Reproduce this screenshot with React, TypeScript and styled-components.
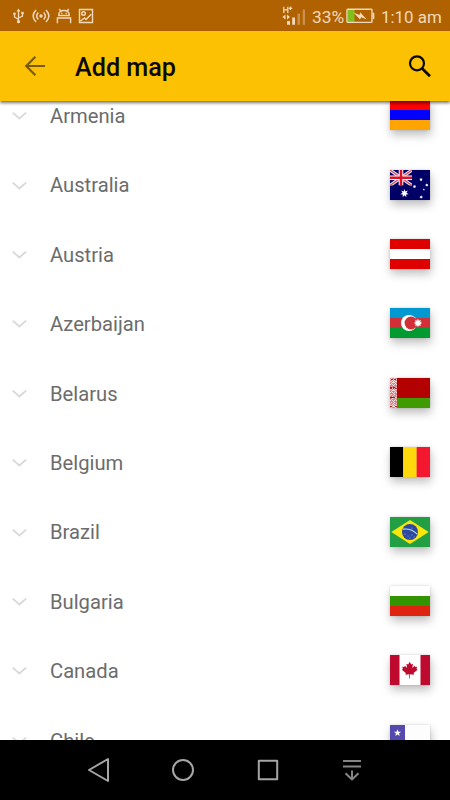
import React from 'react';
import styled, { createGlobalStyle } from 'styled-components';

const GlobalStyle = createGlobalStyle`
  * { box-sizing: border-box; }
  body { margin: 0; background: #fff; font-family: Roboto, sans-serif; overflow: hidden; }
  svg { display: block; flex: none; }
`;

const Screen = styled.main`
  width: 450px;
  height: 800px;
  display: flex;
  flex-direction: column;
  overflow: hidden;
  background: #fff;
`;

const StatusBar = styled.header`
  flex: none;
  height: 31px;
  display: flex;
  align-items: center;
  padding: 1px 8px 0 11px;
  background: #b06200;
  color: #f1d9bc;
`;

const Notifications = styled.div`
  display: flex;
  align-items: center;
  gap: 6px;
`;

const SystemStatus = styled.div`
  display: flex;
  align-items: center;
  margin-left: auto;
`;

const StatusText = styled.span<{ $width: number; $gap: number; $size: number }>`
  width: ${(p) => p.$width}px;
  margin-left: ${(p) => p.$gap}px;
  font-size: ${(p) => p.$size}px;
  line-height: 30px;
  padding-top: 2px;
  white-space: nowrap;
`;

const AppBar = styled.nav`
  flex: none;
  position: relative;
  z-index: 1;
  height: 70px;
  display: flex;
  align-items: center;
  padding: 0 18px 0 24px;
  background: #fdc103;
  box-shadow: 0 2px 3px rgba(0, 0, 0, 0.55);
`;

const IconButton = styled.button`
  display: flex;
  padding: 0;
  border: 0;
  background: none;
`;

const Title = styled.h1`
  flex: 1;
  margin: 4px 0 0 29px;
  font-size: 25.2px;
  line-height: 32px;
  font-weight: 500;
  color: #0c0900;
`;

const Viewport = styled.section`
  flex: 1;
  min-height: 0;
  overflow: hidden;
`;

const CountryList = styled.ul`
  list-style: none;
  margin: -20.4px 0 0;
  padding: 0;
`;

const CountryRow = styled.li`
  height: 69.4px;
  display: flex;
  align-items: center;
  padding: 0 20px 0 11px;
`;

const CountryName = styled.span`
  flex: 1;
  margin: 1.4px 0 0 23px;
  font-size: 20.2px;
  line-height: 28px;
  color: #6c6c6c;
`;

const FlagFrame = styled.div`
  width: 40px;
  height: 30px;
  box-shadow: 0 0 2px rgba(0, 0, 0, 0.16), 1px 5px 10px rgba(0, 0, 0, 0.25);
`;

const NavigationBar = styled.footer`
  flex: none;
  height: 60px;
  display: flex;
  align-items: center;
  justify-content: space-between;
  padding: 0 86px 0 87px;
  background: #000;
`;

const Stripes = ({ colors }: { colors: string[] }) => (
  <>
    {colors.map((c, i) => (
      <rect key={i} y={i * 10} width="40" height="10" fill={c} />
    ))}
  </>
);

const star = (cx: number, cy: number, r: number, inner: number, n: number) =>
  Array.from({ length: n * 2 }, (_, i) => {
    const d = i % 2 ? inner : r;
    const a = -Math.PI / 2 + (i * Math.PI) / n;
    return `${(cx + d * Math.cos(a)).toFixed(2)},${(cy + d * Math.sin(a)).toFixed(2)}`;
  }).join(' ');

const AustraliaFlag = () => (
  <>
    <rect width="40" height="30" fill="#000066" />
    <svg width="22" height="15.5" viewBox="0 0 22 15.5">
      <path d="M0 0L22 15.5M22 0L0 15.5" stroke="#e8e4f0" strokeWidth="3.2" />
      <path d="M0 0L22 15.5M22 0L0 15.5" stroke="#d94a59" strokeWidth="1.2" />
      <path d="M11 0V15.5M0 7.8H22" stroke="#fff" strokeWidth="4.6" />
      <path d="M11 0V15.5M0 7.8H22" stroke="#dc1025" strokeWidth="2.6" />
    </svg>
    <g fill="#fff">
      <polygon points={star(14.5, 23.3, 4.3, 2, 7)} />
      <polygon points={star(31, 9.6, 1.8, 0.9, 7)} />
      <polygon points={star(24.5, 16.6, 1.8, 0.9, 7)} />
      <polygon points={star(36.8, 15, 1.8, 0.9, 7)} />
      <polygon points={star(31.2, 27, 1.8, 0.9, 7)} />
      <polygon points={star(33.8, 19.5, 1.1, 0.5, 5)} />
    </g>
  </>
);

const AzerbaijanFlag = () => (
  <>
    <Stripes colors={['#0098d0', '#d23039', '#009a30']} />
    <circle cx="19" cy="15" r="8" fill="#fff" />
    <circle cx="21" cy="15" r="6.4" fill="#d23039" />
    <polygon points={star(28, 15, 4.2, 2.4, 8)} fill="#fff" />
  </>
);

const ornament = ['1011011', '0110110', '1101011', '0010100', '1100011', '1011101', '0101010', '1110111'];

const BelarusFlag = () => (
  <>
    <rect width="40" height="30" fill="#b30000" />
    <rect y="20" width="40" height="10" fill="#409b00" />
    <rect width="7" height="30" fill="#f4dada" />
    {Array.from({ length: 30 }, (_, y) =>
      [...ornament[y % 8]].map((v, x) =>
        v === '1' ? <rect key={`${x}-${y}`} x={x} y={y} width="1" height="1" fill={y % 9 === 1 ? '#b41c22' : '#d8888b'} /> : null,
      ),
    )}
    <path d="M0 9.5H6M0 19.5H6" stroke="#b5161c" strokeWidth="1.5" strokeDasharray="2 1" />
  </>
);

const BelgiumFlag = () => (
  <>
    <rect width="13.4" height="30" fill="#000" />
    <rect x="13.2" width="13.6" height="30" fill="#ffd90c" />
    <rect x="26.6" width="13.4" height="30" fill="#f31830" />
  </>
);

const BrazilFlag = () => (
  <>
    <rect width="40" height="30" fill="#229e45" />
    <path d="M20 3L38.7 15L20 27L1.3 15Z" fill="#f8e509" />
    <circle cx="20" cy="15" r="8" fill="#2b49a3" />
    <path d="M12.8 12.2Q21 11 27.2 17.2" fill="none" stroke="#c5dce4" strokeWidth="1.2" />
    <g fill="#a3b4de">
      <circle cx="15" cy="17" r=".6" />
      <circle cx="18" cy="19" r=".5" />
      <circle cx="22" cy="18" r=".5" />
      <circle cx="20" cy="21" r=".6" />
      <circle cx="24" cy="20" r=".5" />
      <circle cx="22" cy="11" r=".5" />
    </g>
  </>
);

const CanadaFlag = () => (
  <>
    <rect width="40" height="30" fill="#fff" />
    <rect width="9.5" height="30" fill="#bf0a30" />
    <rect x="30.5" width="9.5" height="30" fill="#bf0a30" />
    <path
      d="M19.7 6.7L21.2 9.6L23 8.7L22.3 13L24.6 10.8L25.2 12.1L27.2 11.8L26.5 14L27.6 14.7L23.6 18L24 19.7L20 19.2V23.5H19.3V19.2L15.4 19.7L15.8 18L11.8 14.7L12.9 14L12.2 11.8L14.3 12.1L14.9 10.8L17.1 13L16.4 8.7L18.2 9.6Z"
      fill="#bf0a30"
    />
  </>
);

const ChileFlag = () => (
  <>
    <rect width="40" height="30" fill="#fcfdfc" />
    <rect y="15" width="40" height="15" fill="#d93d39" />
    <rect width="15" height="15" fill="#5549ad" />
    <polygon points={star(7.5, 8, 3.7, 1.6, 5)} fill="#fff" />
  </>
);

const countries: { name: string; flag: React.ReactNode }[] = [
  { name: 'Armenia', flag: <Stripes colors={['#ff0000', '#0000ff', '#ffa400']} /> },
  { name: 'Australia', flag: <AustraliaFlag /> },
  { name: 'Austria', flag: <Stripes colors={['#df0000', '#fff', '#df0000']} /> },
  { name: 'Azerbaijan', flag: <AzerbaijanFlag /> },
  { name: 'Belarus', flag: <BelarusFlag /> },
  { name: 'Belgium', flag: <BelgiumFlag /> },
  { name: 'Brazil', flag: <BrazilFlag /> },
  { name: 'Bulgaria', flag: <Stripes colors={['#fff', '#319400', '#de2310']} /> },
  { name: 'Canada', flag: <CanadaFlag /> },
  { name: 'Chile', flag: <ChileFlag /> },
];

const UsbIcon = () => (
  <svg width="15" height="16" viewBox="0 0 15 16" fill="none" stroke="currentColor" strokeWidth="1.3">
    <path d="M7.5 2V14M7.5 11.5L3.5 9V5.5M7.5 10L11.5 8V5" />
    <path d="M5.5 3.5L7.5 .5L9.5 3.5Z" fill="currentColor" stroke="none" />
    <circle cx="7.5" cy="13.7" r="1.6" fill="currentColor" stroke="none" />
    <circle cx="3.5" cy="5.7" r="1.3" fill="currentColor" stroke="none" />
    <path d="M10.3 3.8H12.7V6.2H10.3Z" fill="currentColor" stroke="none" />
  </svg>
);

const BroadcastIcon = () => (
  <svg width="18" height="16" viewBox="0 0 18 16" fill="none" stroke="currentColor" strokeWidth="1.5">
    <path d="M4 2Q-1.7 8 4 14M14 2Q19.7 8 14 14M6.3 4.5Q3 8 6.3 11.5M11.7 4.5Q15 8 11.7 11.5" />
    <circle cx="9" cy="8" r="1.7" fill="currentColor" stroke="none" />
  </svg>
);

const AndroidIcon = () => (
  <svg width="16" height="16" viewBox="0 0 16 16" fill="none" stroke="currentColor" strokeWidth="1.4">
    <path d="M2.7 7.5Q2.7 2.5 8 2.5Q13.3 2.5 13.3 7.5ZM4.8 3.2L3.3 1M11.2 3.2L12.7 1M1.4 15.2V10H14.6V15.2" />
    <circle cx="5.8" cy="5.3" r=".8" fill="currentColor" stroke="none" />
    <circle cx="10.2" cy="5.3" r=".8" fill="currentColor" stroke="none" />
  </svg>
);

const PictureIcon = () => (
  <svg width="16" height="16" viewBox="0 0 16 16" fill="none" stroke="currentColor" strokeWidth="1.4">
    <path d="M1.5 1.5H14.5V14.5H1.5ZM2.5 13L6.5 10L8 11.5L13.2 6.2" />
    <circle cx="5.5" cy="5.5" r="1.8" />
  </svg>
);

const SignalIcon = () => (
  <svg width="24" height="20" viewBox="0 0 24 20">
    <g stroke="currentColor" strokeWidth="1.3" fill="none">
      <path d="M1.8 .8V7M5.8 .8V7M1.8 3.9H5.8M6.8 2.3H10.2M8.5 .6V4" />
    </g>
    <path d="M3.5 8.5V13.5L.5 11ZM5 8.5V13.5L8 11Z" fill="currentColor" />
    <path d="M5 15H8V18.8H5ZM10.2 11.5H13V18.8H10.2Z" fill="currentColor" />
    <path d="M15.5 7.8H18V18.8H15.5ZM20.7 3.5H23V18.8H20.7Z" fill="#ca9150" />
  </svg>
);

const BatteryIcon = () => (
  <svg width="29" height="16" viewBox="0 0 29 16">
    <rect x="2" y="2" width="6.5" height="12" fill="#83be1f" />
    <rect x="1" y="1.2" width="25" height="13.2" rx=".8" fill="none" stroke="currentColor" strokeWidth="1.4" />
    <path d="M26.7 4.8H28.3V11H26.7Z" fill="currentColor" />
    <path d="M7.5 4.5L13.5 7L14.2 4.3L20.7 11.5L15.2 9.2L14 11.5Z" fill="currentColor" />
  </svg>
);

const BackIcon = () => (
  <svg width="22" height="22" viewBox="0 0 22 22" fill="none" stroke="#795a08" strokeWidth="2.2">
    <path d="M21 11H3M11.4 1.8L2.2 11L11.4 20.2" />
  </svg>
);

const SearchIcon = () => (
  <svg width="24" height="24" viewBox="0 0 24 24" fill="none" stroke="#080600">
    <circle cx="9" cy="9.3" r="7" strokeWidth="2.2" />
    <path d="M14.2 14.5L22 22.2" strokeWidth="2.7" />
  </svg>
);

const Chevron = () => (
  <svg width="16" height="10" viewBox="0 0 16 10" fill="none" stroke="#d9d9d9" strokeWidth="1.9">
    <path d="M1.7 2.6L8.4 8.4L15.1 2.6" />
  </svg>
);

const NavIcon = ({ path, color = '#a5a5a5', width = 2 }: { path: string; color?: string; width?: number }) => (
  <svg width="24" height="26" viewBox="0 0 24 26" fill="none" stroke={color} strokeWidth={width} strokeLinejoin="round">
    <path d={path} />
  </svg>
);

export default function App() {
  return (
    <Screen>
      <GlobalStyle />
      <StatusBar>
        <Notifications>
          <UsbIcon />
          <BroadcastIcon />
          <AndroidIcon />
          <PictureIcon />
        </Notifications>
        <SystemStatus>
          <SignalIcon />
          <StatusText $width={34} $gap={6} $size={17.4}>33%</StatusText>
          <BatteryIcon />
          <StatusText $width={61} $gap={6} $size={16.9}>1:10 am</StatusText>
        </SystemStatus>
      </StatusBar>
      <AppBar>
        <IconButton aria-label="Back"><BackIcon /></IconButton>
        <Title>Add map</Title>
        <IconButton aria-label="Search"><SearchIcon /></IconButton>
      </AppBar>
      <Viewport>
        <CountryList>
          {countries.map(({ name, flag }) => (
            <CountryRow key={name}>
              <Chevron />
              <CountryName>{name}</CountryName>
              <FlagFrame>
                <svg width="40" height="30" viewBox="0 0 40 30">{flag}</svg>
              </FlagFrame>
            </CountryRow>
          ))}
        </CountryList>
      </Viewport>
      <NavigationBar>
        <NavIcon path="M2 13L21 2V24Z" />
        <NavIcon path="M22 13A10 10 0 1 1 2 13A10 10 0 1 1 22 13Z" />
        <NavIcon path="M2.8 3.8H21.2V22.2H2.8Z" />
        <NavIcon path="M3 4H21M3 9.5H21M12 13.5V22.5M5.5 16.2L12 22.5L18.5 16.2" color="#858585" />
      </NavigationBar>
    </Screen>
  );
}
